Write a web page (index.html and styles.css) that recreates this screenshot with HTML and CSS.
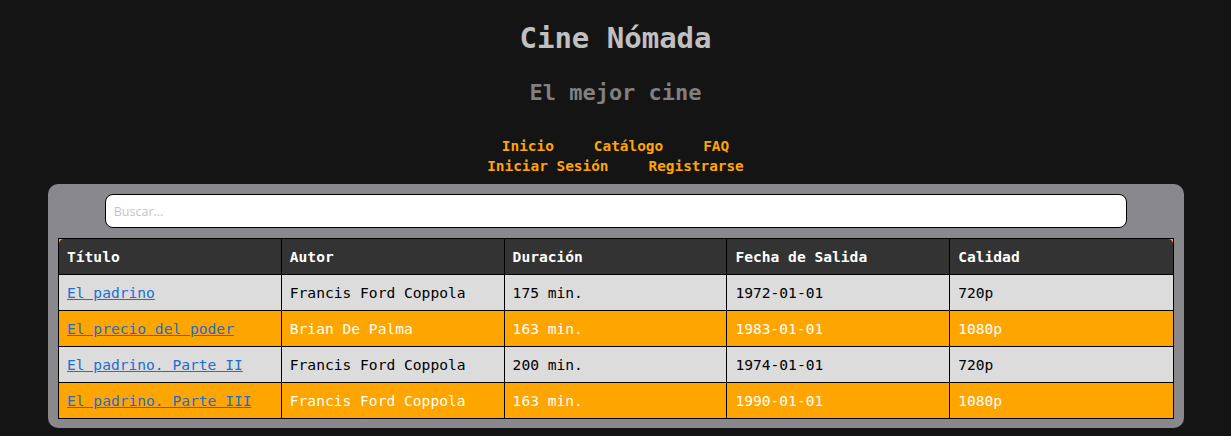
FILE: index.html
```html
<!DOCTYPE html>
<html lang="es">
<head>
<meta charset="utf-8">
<title>Cine Nómada</title>
<link rel="stylesheet" href="styles.css">
</head>
<body>
<header class="site-header">
  <h1 class="site-title">Cine Nómada</h1>
  <h2 class="site-subtitle">El mejor cine</h2>
  <nav class="main-nav">
    <a href="#">Inicio</a>
    <a href="#">Catálogo</a>
    <a href="#">FAQ</a>
    <a href="#">Iniciar Sesión</a>
    <a href="#">Registrarse</a>
  </nav>
</header>
<main class="panel">
  <input class="search" type="text" placeholder="Buscar...">
  <table class="movies">
    <thead>
      <tr><th>Título</th><th>Autor</th><th>Duración</th><th>Fecha de Salida</th><th>Calidad</th></tr>
    </thead>
    <tbody>
      <tr><td><a href="#">El padrino</a></td><td>Francis Ford Coppola</td><td>175 min.</td><td>1972-01-01</td><td>720p</td></tr>
      <tr><td><a href="#">El precio del poder</a></td><td>Brian De Palma</td><td>163 min.</td><td>1983-01-01</td><td>1080p</td></tr>
      <tr><td><a href="#">El padrino. Parte II</a></td><td>Francis Ford Coppola</td><td>200 min.</td><td>1974-01-01</td><td>720p</td></tr>
      <tr><td><a href="#">El padrino. Parte III</a></td><td>Francis Ford Coppola</td><td>163 min.</td><td>1990-01-01</td><td>1080p</td></tr>
    </tbody>
  </table>
</main>
</body>
</html>
```
FILE: styles.css
```css
html, body {
  margin: 0;
  padding: 0;
  background: #141414;
  font-family: "DejaVu Sans Mono", "Liberation Mono", monospace;
}

.site-header {
  text-align: center;
  padding-top: 1px;
}

.site-title {
  margin: 18px 0 0;
  font-size: 29px;
  line-height: 38px;
  color: #c0c0c0;
  font-weight: bold;
}

.site-subtitle {
  margin: 22px 0 0;
  font-size: 22px;
  line-height: 28px;
  color: #808080;
  font-weight: bold;
}

.main-nav {
  margin: 30px auto 0;
  max-width: 340px;
  display: flex;
  flex-wrap: wrap;
  justify-content: center;
  column-gap: 40px;
}

.main-nav a {
  color: #ffa500;
  font-weight: bold;
  font-size: 14.4px;
  line-height: 19.5px;
  text-decoration: none;
}

.panel {
  margin: 8px 47px 0 48px;
  background: #89888c;
  border-radius: 10px;
  padding: 10px 10px 9px;
}

.search {
  display: block;
  box-sizing: content-box;
  width: 90%;
  height: 32px;
  margin: 0 auto 10px;
  border: 1px solid #000;
  border-radius: 8px;
  background: #fff;
  padding: 0 8px;
  font-family: "Open Sans", "Noto Sans", sans-serif;
  font-size: 12.5px;
  outline: none;
}

.search::placeholder {
  color: #c4c4c4;
}

.movies {
  width: 100%;
  table-layout: fixed;
  border-collapse: separate;
  border-spacing: 0;
  border: 1px solid #000;
  background: #ffa500;
  font-size: 14.6px;
}

.movies th,
.movies td {
  text-align: left;
  padding: 8px;
  border-right: 1px solid #000;
  border-bottom: 1px solid #000;
}

.movies th:last-child,
.movies td:last-child {
  border-right: none;
}

.movies tbody tr:last-child td {
  border-bottom: none;
}

.movies th {
  background: #333;
  color: #fff;
  font-weight: bold;
  line-height: 19px;
}

.movies th:first-child {
  border-top-left-radius: 5px;
}

.movies th:last-child {
  border-top-right-radius: 5px;
}

.movies td {
  line-height: 19px;
}

.movies tbody tr:nth-child(odd) td {
  background: #dcdcdc;
  color: #000;
}

.movies tbody tr:nth-child(even) td {
  background: #ffa500;
  color: #fff;
}

.movies a {
  color: #1a6fd0;
  text-decoration: underline;
}
```
